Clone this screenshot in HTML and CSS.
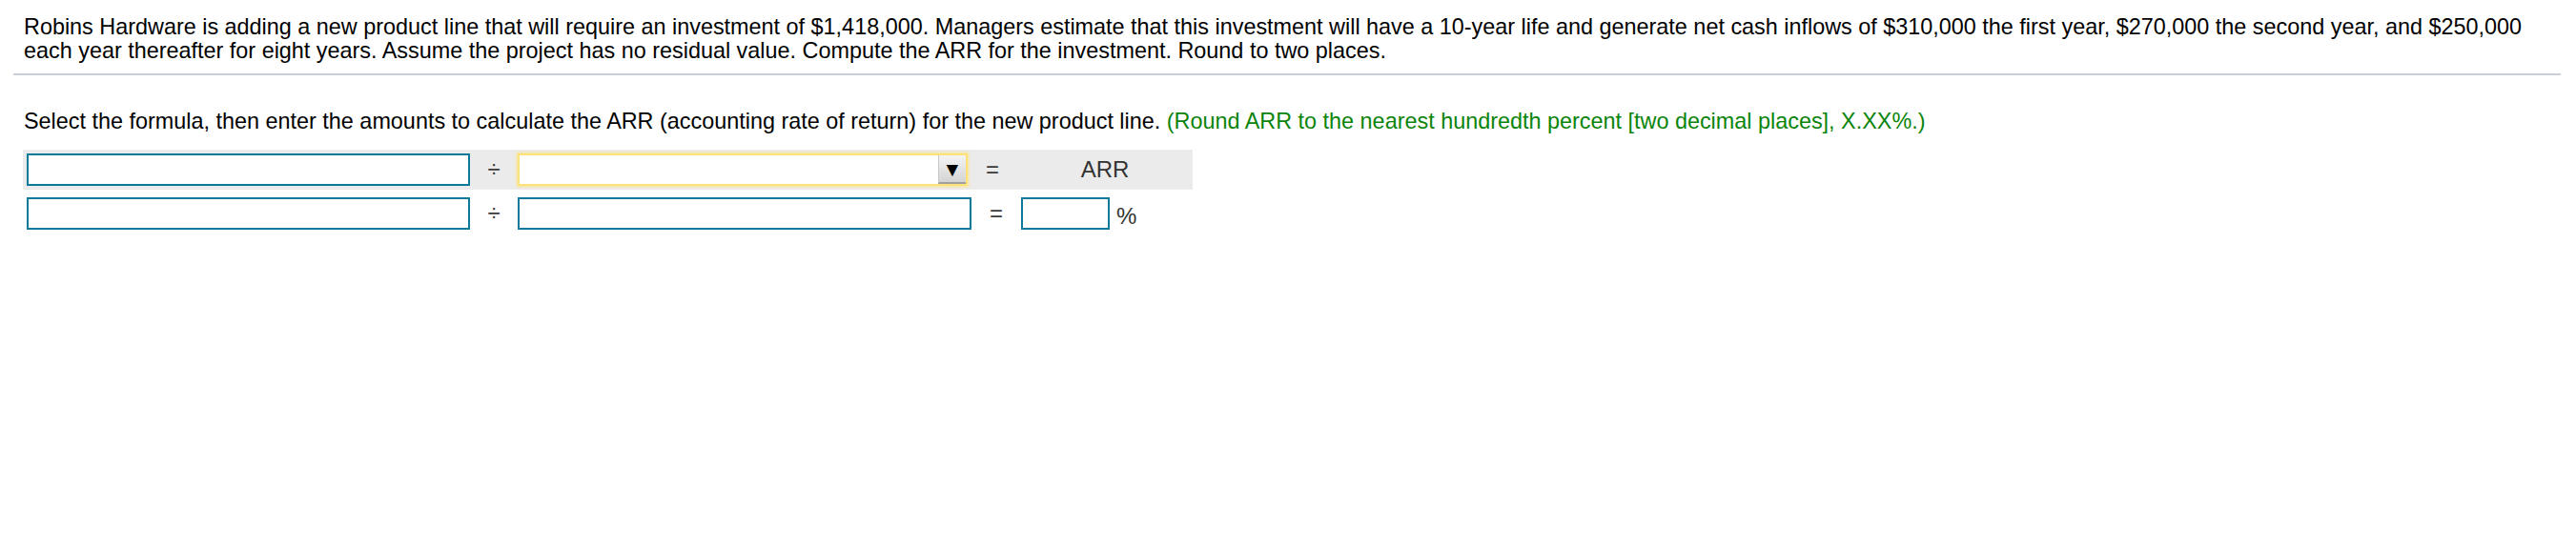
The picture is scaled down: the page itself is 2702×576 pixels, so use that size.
FILE: index.html
```html
<!DOCTYPE html>
<html>
<head>
<meta charset="utf-8">
<link rel="stylesheet" href="styles.css">
</head>
<body>
<div class="page">
  <p class="question">Robins Hardware is adding a new product line that will require an investment of $1,418,000. Managers estimate that this investment will have a 10-year life and generate net cash inflows of $310,000 the first year, $270,000 the second year, and $250,000 each year thereafter for eight years. Assume the project has no residual value. Compute the ARR for the investment. Round to two places.</p>
  <div class="sep"></div>
  <p class="instr">Select the formula, then enter the amounts to calculate the ARR (accounting rate of return) for the new product line. <span class="hint">(Round ARR to the nearest hundredth percent [two decimal places], X.XX%.)</span></p>
  <div class="formula">
    <div class="row head">
      <div class="box wide"></div>
      <div class="op">÷</div>
      <div class="select"><div class="arrow">▼</div></div>
      <div class="op eq">=</div>
      <div class="result">ARR</div>
    </div>
    <div class="row">
      <div class="box wide"></div>
      <div class="op">÷</div>
      <div class="box wide2"></div>
      <div class="op eq">=</div>
      <div class="resultcell"><div class="box small"></div><span class="pct">%</span></div>
    </div>
  </div>
</div>
</body>
</html>
```

FILE: styles.css
```css
html, body {
  margin: 0;
  padding: 0;
  background: #ffffff;
}
body {
  font-family: "Liberation Sans", Arial, sans-serif;
  color: #000;
}
.page {
  padding: 16px 16px 0 14px;
}
.question {
  margin: 0;
  padding: 0 0 0 11px;
  font-size: 23.4px;
  line-height: 24.5px;
}
.sep {
  margin-top: 12px;
  height: 2px;
  background: #c9ceda;
}
.instr {
  margin: 36px 0 0 0;
  padding-left: 11px;
  font-size: 23.4px;
  line-height: 24px;
}
.hint {
  color: #0a840a;
}
.formula {
  margin-top: 18px;
  margin-left: 10px;
  display: flex;
  flex-direction: column;
  gap: 4px;
}
.row {
  display: flex;
  align-items: center;
  height: 42px;
  width: 1227px;
  padding-left: 4px;
  box-sizing: border-box;
}
.row.head {
  background: #ebebeb;
}
.box {
  box-sizing: border-box;
  height: 34px;
  border: 2px solid #0b7a99;
  background: #fff;
}
.wide { width: 465px; }
.wide2 { width: 476px; }
.small { width: 93px; }
.op {
  width: 50px;
  text-align: center;
  font-size: 24px;
  color: #3a3a3a;
}
.op.eq {
  width: 52px;
}
.select {
  box-sizing: border-box;
  width: 472px;
  height: 34px;
  background: #fff;
  border: 2px solid #fde27a;
  box-shadow: 0 0 3px 1px #fbe48c;
  display: flex;
  justify-content: flex-end;
  align-items: stretch;
}
.arrow {
  width: 28px;
  background: linear-gradient(#f4f4f4, #d4d4d4);
  border-left: 1px solid #c8c8c8;
  border-bottom: 2px solid #a0a0a0;
  font-size: 21px;
  line-height: 30px;
  text-align: center;
  color: #000;
}
.result {
  flex: 1;
  text-align: center;
  font-size: 24px;
  color: #333;
}
.resultcell {
  display: flex;
  align-items: center;
  gap: 7px;
}
.pct {
  font-size: 24px;
  color: #333;
  padding-top: 6px;
}
```
